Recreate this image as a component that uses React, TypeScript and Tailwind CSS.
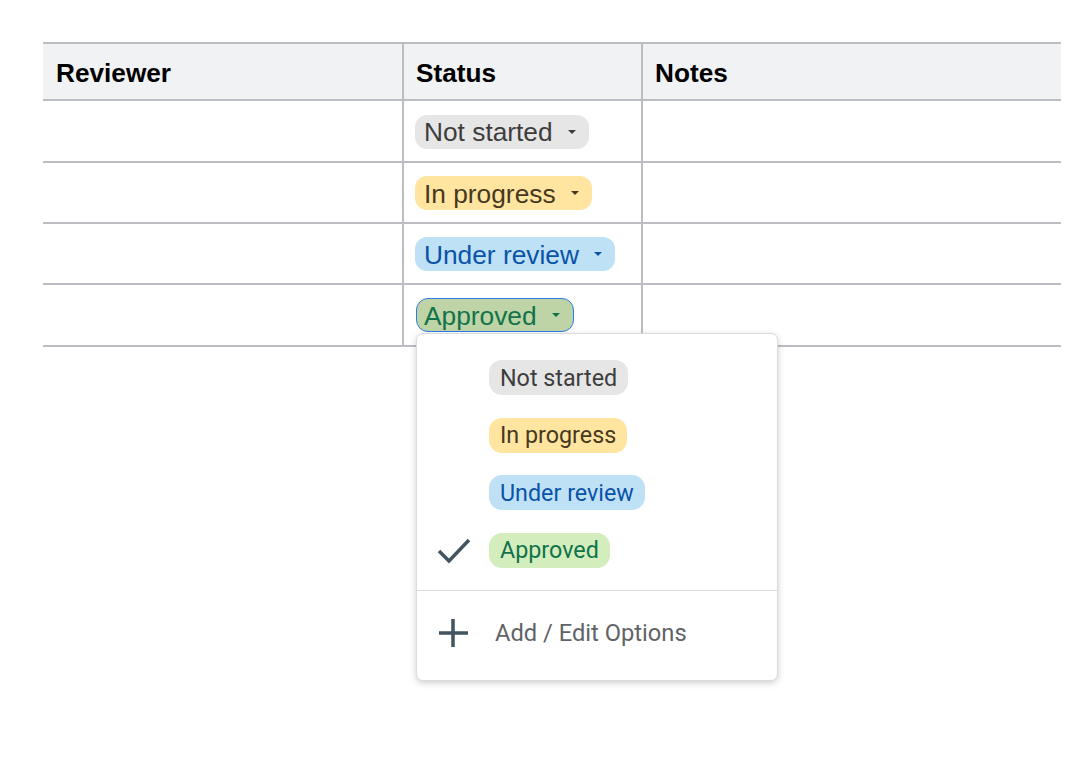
import React from 'react';

const statuses = [
  { label: 'Not started', bg: 'bg-[#e6e6e6]', text: 'text-[#3d3d3d]', caret: 'border-t-[#3d3d3d]', rowH: 'h-[62px]', pad: 'pt-[14px]', chip: 'pl-[9px] pr-[13px]', labelPad: '' },
  { label: 'In progress', bg: 'bg-[#ffe5a0]', text: 'text-[#473821]', caret: 'border-t-[#473821]', rowH: 'h-[61px]', pad: 'pt-[13px]', chip: 'pl-[9px] pr-[13px]', labelPad: 'pt-[2px]' },
  { label: 'Under review', bg: 'bg-[#bfe1f6]', text: 'text-[#0a53a8]', caret: 'border-t-[#0a53a8]', rowH: 'h-[61px]', pad: 'pt-[13px]', chip: 'pl-[9px] pr-[13px]', labelPad: 'pt-[2px]' },
  { label: 'Approved', bg: 'bg-[#bfd4a6]', text: 'text-[#11734b]', caret: 'border-t-[#11734b]', rowH: 'h-[62px]', pad: 'pt-[13px]', chip: 'pl-[7px] pr-[13px] ml-[1px] border border-[#2a7de8]', labelPad: 'pt-[2px]' },
];

const menuChips = [
  { label: 'Not started', cls: 'bg-[#e6e6e6] text-[#3d3d3d] leading-[36px]' },
  { label: 'In progress', cls: 'bg-[#ffe5a0] text-[#473821] leading-[35px]' },
  { label: 'Under review', cls: 'bg-[#bfe1f6] text-[#0a53a8] leading-[36px]' },
  { label: 'Approved', cls: 'bg-[#d4edbc] text-[#11734b] leading-[35px]' },
];

const Cell = ({ className = '', children }: { className?: string; children?: React.ReactNode }) => (
  <div className={className}>{children}</div>
);

export default function App() {
  return (
    <div className="relative w-[1086px] h-[762px] bg-white overflow-hidden font-['Liberation_Sans',Arial,sans-serif]">
      <div className="pt-[42px] pl-[43px] w-[1061px]">
        {/* header */}
        <div className="grid grid-cols-[361px_239px_1fr] h-[59px] bg-[#f1f2f4] border-y-2 border-[#bbbdc3] text-[26.2px] font-bold text-black">
          <Cell className="pl-[13px] pt-[13px] leading-[32px] border-r-2 border-[#bbbdc3]">Reviewer</Cell>
          <Cell className="pl-[12px] pt-[13px] leading-[32px] border-r-2 border-[#bbbdc3]">Status</Cell>
          <Cell className="pl-[12px] pt-[13px] leading-[32px]">Notes</Cell>
        </div>
        {/* rows */}
        {statuses.map((s) => (
          <div key={s.label} className={`grid grid-cols-[361px_239px_1fr] border-b-2 border-[#bbbdc3] ${s.rowH}`}>
            <Cell className="border-r-2 border-[#bbbdc3]" />
            <Cell className={`border-r-2 border-[#bbbdc3] pl-[11px] ${s.pad}`}>
              <span
                className={`inline-flex items-center h-[34px] rounded-[12px] text-[26.3px] leading-[30px] ${s.chip} ${s.bg} ${s.text}`}
              >
                <span className={s.labelPad}>{s.label}</span>
                <span className={`ml-[15px] w-0 h-0 border-x-[4px] border-x-transparent border-t-[4px] ${s.caret}`} />
              </span>
            </Cell>
            <Cell />
          </div>
        ))}
      </div>

      {/* dropdown menu */}
      <div className="absolute left-[416px] top-[333px] w-[362px] h-[348px] bg-white rounded-[7px] border border-[#dadce0] shadow-[0_2px_6px_rgba(60,64,67,0.25)] font-['Roboto',sans-serif]">
        <div className="pt-[26px] pl-[72px] flex flex-col items-start gap-[22.6px] h-[256px]">
          {menuChips.map((c) => (
            <span key={c.label} className={`h-[35px] px-[11px] rounded-[13px] text-[23.3px] whitespace-nowrap ${c.cls}`}>
              {c.label}
            </span>
          ))}
        </div>
        <div className="border-t border-[#dadce0] flex items-center h-[84px] pl-[21px]">
          <svg width="30" height="30" viewBox="0 0 30 30" fill="none" stroke="#41545f" strokeWidth="3.5">
            <path d="M15 1 V29 M1 15 H30" />
          </svg>
          <span className="ml-[27px] mt-[2px] text-[23.7px] text-[#616366]">Add / Edit Options</span>
        </div>
        <svg className="absolute left-[20px] top-[204px]" width="34" height="26" viewBox="0 0 34 26" fill="none" stroke="#41545f" strokeWidth="3.5">
          <path d="M2 13 L12 23 L32 2" />
        </svg>
      </div>
    </div>
  );
}
